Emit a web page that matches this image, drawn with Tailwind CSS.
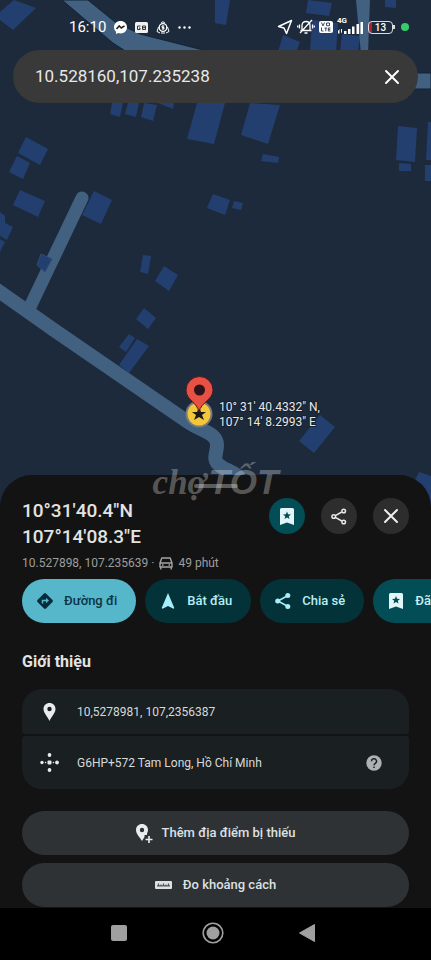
<!DOCTYPE html>
<html lang="vi">
  <head>
    <meta charset="UTF-8" />
    <meta name="viewport" content="width=device-width, initial-scale=1.0" />
    <title>10°31'40.4"N 107°14'08.3"E</title>
    <script src="https://cdn.jsdelivr.net/npm/@tailwindcss/browser@4"></script>
  </head>
  <body class="bg-black font-[Roboto,sans-serif] text-[#e3e3e3]">
    <div class="relative min-h-screen flex flex-col overflow-hidden">
      <div class="relative h-[510px] overflow-hidden bg-[#1c2a3b]">
        <!-- Map -->
        <svg class="absolute inset-0 w-full h-full" viewBox="0 0 431 510" preserveAspectRatio="xMidYMin slice">
          <g fill="#233f70">
            <path d="M14 0L36 8L13 30L0 20V12Z" />
            <path d="M215 0H230L226 25L215 23Z" />
            <path d="M308 0L332 3L329 16L306 13Z" />
            <path d="M385 0H396V8L385 7Z" />
            <path d="M283 35L300 42L296 52H278Z" />
            <path d="M312 20L338 23L336 52H310Z" />
            <path d="M342 34L360 36L358 52H340Z" />
            <path d="M112 103H123L120 117L110 114Z" />
            <path d="M128 103H139L136 117L125 114Z" />
            <path d="M144 103L157 105L153 121L141 117Z" />
            <path d="M158 103H174L173 109Z" />
            <path d="M197 103H225L214 144L187 139Z" />
            <path d="M250 103L280 105L268 144L241 135Z" />
            <path d="M263 154L279 157L278 163L261 161Z" />
            <path d="M398 126L417 128L415 162L396 160Z" />
            <path d="M399 163L411 164V171H399Z" />
            <path d="M428 122H431V160H426Z" />
            <path d="M425 165H431V181H425Z" />
            <path d="M26 137L48 149L40 165L18 153Z" />
            <path d="M17 156L30 163L23 179L9 172Z" />
            <path d="M20 190L45 201L38 217L13 205Z" />
            <path d="M0 212L5 216V223L13 227L7 240L0 236Z" />
            <path d="M0 239L5 242L0 252Z" />
            <path d="M213 194L230 200L225 215L207 208Z" />
            <path d="M234 201L243 203L241 210L232 208Z" />
            <path d="M143 255L151 256L148 274L140 272Z" />
            <path d="M164 266L178 275L169 291L155 281Z" />
            <path d="M144 308L156 318L148 329L136 319Z" />
            <path d="M129 334L135 338L126 352L119 347Z" />
            <path d="M137 339L149 346L129 373L119 365Z" />
            <path d="M320 415L335 427L314 453L299 441Z" />
            <path d="M419 472L431 476V510H400Z" />
          </g>
          <path d="M62 0H88L115 22L140 34L203 50V54H130L113 43L88 22Z" fill="#42607f" stroke="#10243a" />
          <path d="M356 0H370L368 54H361Z" fill="#42607f" />
          <path d="M410 73H431V89H410Z" fill="#42607f" stroke="#10243a" />
          <g fill="none" stroke="#42607f" stroke-linecap="round" stroke-linejoin="round">
            <path d="M82 198L29 309" stroke-width="13" />
            <path d="M-10 285L54 330L188 422C206 433 217 434 217 445C217 453 213 458 217 463C222 469 230 470 238 476" stroke-width="14" />
          </g>
          <path d="M94 191L112 200L101 224L82 215Z" fill="#233f70" />
          <path d="M41 254L52 259L45 272L37 265Z" fill="#233f70" stroke="#2d4d78" />
          <!-- Saved place and pin -->
          <circle cx="199" cy="414" r="12.5" fill="#f2c739" stroke="#78797c" stroke-width="2" />
          <path d="M199 407L201 412H206L202 415L204 420L199 417L194 420L196 415L192 412H197Z" fill="#1c1a18" />
          <path d="M199 412C197 402 186 400 186 390A13.500 13.500 0 0 1 213 390C213 400 201 402 199 412Z" fill="#e95044" stroke="#431b20" />
          <circle cx="199.500" cy="390" r="5.500" fill="#29151b" />
          <g class="text-[12px]" fill="#e6e8eb" stroke="#17202b" stroke-width="2" paint-order="stroke">
            <text x="219" y="411">10° 31' 40.4332" N,</text>
            <text x="219" y="426">107° 14' 8.2993" E</text>
          </g>
        </svg>

        <!-- Status bar -->
        <div class="relative h-[50px] pl-[69px] pr-[22px] pt-1 flex items-center justify-between text-white">
          <div class="flex items-center gap-2">
            <span class="text-[15px]">16:10</span>
            <svg class="w-[13px] h-[13px]" viewBox="0 0 13 13">
              <path d="M6.500 0C2.800 0 0 2.700 0 6.200C0 8 .8 9.600 2 10.700V13L4.300 12C5 12.300 5.700 12.400 6.500 12.400C10.200 12.400 13 9.700 13 6.200S10.200 0 6.500 0Z" fill="#fff" />
              <path d="M2.500 8L5.200 5L7.300 7L10.500 4.800" fill="none" stroke="#222" stroke-width="1.600" />
            </svg>
            <svg class="w-[13px] h-[11px]" viewBox="0 0 13 11">
              <rect width="13" height="11" rx="1.500" fill="#f1f1f1" />
              <path d="M5.500 4H2.500V7.500H5V6H4M7.500 4V7.500H10.500V4ZM7.500 5.700H10.500" fill="none" stroke="#333" />
            </svg>
            <svg class="w-[14px] h-[13px]" viewBox="0 0 14 13" fill="none" stroke="#fff">
              <circle cx="7" cy="6.500" r="3.800" stroke-width="1.300" />
              <path d="M5 2L7 .7L9 2M2.500 6L1 10.500L4 12M11.500 6L13 10.500L10 12M5 12H9M7 4.500V8.500M8.200 5H6V6.500H8V8H5.800" />
            </svg>
            <svg class="w-[13px] h-[3px]" viewBox="0 0 13 3" fill="#fff">
              <circle cx="1.500" cy="1.500" r="1.200" /><circle cx="6.500" cy="1.500" r="1.200" /><circle cx="11.500" cy="1.500" r="1.200" />
            </svg>
          </div>
          <div class="flex items-center gap-1">
            <svg class="w-[16px] h-[16px]" viewBox="0 0 16 16" fill="none" stroke="#fff" stroke-width="1.500" stroke-linejoin="round">
              <path d="M14.500 1.500L1.500 7.500L7 9L9.500 14.500Z" />
            </svg>
            <svg class="w-[18px] h-[16px]" viewBox="0 0 18 16" fill="none" stroke="#fff" stroke-width="1.300">
              <path d="M5 11.500V6.500C5 4 6.500 2.500 9 2.500S13 4 13 6.500V11.500M3.500 11.500H14.500M7.500 14H10.500M15 1L3 14M2.500 5.500V9.500M.7 6.500V8.500M15.500 5.500V9.500M17.300 6.500V8.500" />
            </svg>
            <svg class="w-[14px] h-[12px]" viewBox="0 0 14 12">
              <rect width="14" height="12" rx="2" fill="#fff" />
              <path d="M2.500 1.500L4 5L5.500 1.500M7.500 2H10.500V4.700H7.500ZM2.500 6.500V10H4.500M5.500 7H8M6.800 7V10.300M11.500 7H9.300V10H11.500M9.300 8.500H11.200" fill="none" stroke="#2b3a4d" stroke-width=".9" />
            </svg>
            <div class="relative">
              <span class="absolute left-0 -top-1 text-[8px] leading-2 font-bold">4G</span>
              <svg class="w-[27px] h-[13px]" viewBox="0 0 27 13" fill="#fff">
                <path d="M1 10L2.500 8V12.500H1ZM4 8H5V11L4 12.500ZM7 10H9.500V13H7ZM11 8H13.500V13H11ZM15 5.500H17.500V13H15ZM19.500 3H22V13H19.500ZM23.500 1H26V13H23.500Z" />
              </svg>
            </div>
            <div class="flex items-center">
              <div class="w-[25px] h-[13px] rounded-[4px] border border-[#ddd] text-[10px] leading-[11px] font-medium text-center bg-linear-to-r from-[#b3202c] from-15% to-transparent to-15%">13</div>
              <div class="w-[2px] h-[4px] bg-[#ddd]"></div>
            </div>
            <div class="w-[8px] h-[8px] ml-[2px] rounded-full bg-[#35cb69]"></div>
          </div>
        </div>

        <!-- Search -->
        <form class="relative mx-[13px] h-[53px] pl-[22px] pr-[14px] rounded-full bg-[#393939] flex items-center">
          <input type="text" aria-label="Tìm kiếm" value="10.528160,107.235238" class="flex-1 min-w-0 text-[17px] text-[#e8e8e8] outline-none" />
          <button type="reset" aria-label="Xóa" class="p-1">
            <svg class="w-[16px] h-[16px]" viewBox="0 0 16 16" stroke="#fff" stroke-width="2" stroke-linecap="round">
              <path d="M2 2L14 14M14 2L2 14" />
            </svg>
          </button>
        </form>
      </div>

      <!-- Place sheet -->
      <main class="relative -mt-[35px] rounded-t-[32px] bg-[#131313] flex flex-col">
        <div class="mx-auto mt-[9px] w-[44px] h-[4px] rounded-full bg-[#5c5c5c]"></div>
        <div class="mt-[10px] px-[22px] flex items-start justify-between">
          <h1 class="text-[19px] leading-[26px] font-medium">10°31'40.4"N<br />107°14'08.3"E</h1>
          <div class="flex gap-4">
            <button aria-label="Đã lưu" class="w-[36px] h-[36px] rounded-full bg-[#034d56] flex items-center justify-center">
              <svg class="w-[14px] h-[17px]" viewBox="0 0 14 17">
                <path d="M1.500 0H12.500Q14 0 14 1.500V17L7 14.500L0 17V1.500Q0 0 1.500 0Z" fill="#e2f6fa" />
                <path d="M7 3.500L8.100 6.200L11 6.400L8.800 8.200L9.500 11L7 9.500L4.500 11L5.200 8.200L3 6.400L5.900 6.200Z" fill="#034d56" />
              </svg>
            </button>
            <button aria-label="Chia sẻ" class="w-[36px] h-[36px] rounded-full bg-[#2d2d2d] flex items-center justify-center">
              <svg class="w-[16px] h-[17px]" viewBox="0 0 16 17" fill="none" stroke="#e8e8e8" stroke-width="1.500">
                <path d="M4.300 7.600L10.800 4M4.300 9.400L10.800 13" />
                <circle cx="2.700" cy="8.500" r="1.800" /><circle cx="12.700" cy="3" r="1.800" /><circle cx="12.700" cy="14" r="1.800" />
              </svg>
            </button>
            <button aria-label="Đóng" class="w-[36px] h-[36px] rounded-full bg-[#2d2d2d] flex items-center justify-center">
              <svg class="w-[16px] h-[16px]" viewBox="0 0 16 16" stroke="#eee" stroke-width="2" stroke-linecap="round">
                <path d="M2 2L14 14M14 2L2 14" />
              </svg>
            </button>
          </div>
        </div>

        <p class="mt-[4px] px-[22px] flex items-center gap-[5px] text-[12px] leading-[18px] text-[#9e9e9e]">
          10.527898, 107.235639 ·
          <svg class="w-[14px] h-[13px]" viewBox="0 0 14 13" fill="none" stroke="#a5a5a5" stroke-width="1.400" stroke-linejoin="round">
            <path d="M1 6L2.800 1H11.200L13 6V10H1ZM1 6H13M1.800 10V12.500M12.200 10V12.500" />
            <path d="M3 8H4.500M9.500 8H11" />
          </svg>
          49 phút
        </p>

        <div class="mt-[7px] pl-[22px] flex gap-[9px] overflow-hidden text-[13px] font-medium whitespace-nowrap">
          <button class="shrink-0 h-[44px] pl-[15px] pr-[19px] rounded-full bg-[#55b7c9] text-[#0b3445] flex items-center gap-[11px]">
            <svg class="w-[16px] h-[16px]" viewBox="0 0 16 16">
              <path d="M7 .5Q8 -.4 9 .5L15.500 7Q16.400 8 15.500 9L9 15.500Q8 16.400 7 15.500L.5 9Q-.4 8 .5 7Z" fill="#082b3b" />
              <path d="M5.500 10.500V7.500H9.500" fill="none" stroke="#55b7c9" stroke-width="1.500" />
              <path d="M9 4.800L12 7.500L9 10.200Z" fill="#55b7c9" />
            </svg>
            Đường đi
          </button>
          <button class="shrink-0 h-[44px] pl-[15px] pr-[19px] rounded-full bg-[#033338] text-[#b4edf6] flex items-center gap-[11px]">
            <svg class="w-[16px] h-[16px]" viewBox="0 0 16 16" fill="#a6effa">
              <path d="M8 0L14.300 15L13.500 15.800L8 13L2.500 15.800L1.700 15Z" />
            </svg>
            Bắt đầu
          </button>
          <button class="shrink-0 h-[44px] pl-[15px] pr-[19px] rounded-full bg-[#033338] text-[#b4edf6] flex items-center gap-[11px]">
            <svg class="w-[16px] h-[16px]" viewBox="0 0 16 16" fill="#a6effa">
              <path d="M3 8L13 2.500M3 8L13 13.500" stroke="#a6effa" stroke-width="1.500" />
              <circle cx="2.700" cy="8" r="2.500" /><circle cx="12.800" cy="2.500" r="2.500" /><circle cx="12.800" cy="13.500" r="2.500" />
            </svg>
            Chia sẻ
          </button>
          <button class="shrink-0 h-[44px] pl-[15px] pr-[19px] rounded-full bg-[#034d56] text-[#c9f2f8] flex items-center gap-[11px]">
            <svg class="w-[16px] h-[16px]" viewBox="0 0 16 16">
              <path d="M2.500 0H13.500Q15 0 15 1.500V16L8 13.500L1 16V1.500Q1 0 2.500 0Z" fill="#e2f6fa" />
              <path d="M8 3L9.100 5.700L12 5.900L9.800 7.700L10.500 10.500L8 9L5.500 10.500L6.200 7.700L4 5.900L6.900 5.700Z" fill="#034d56" />
            </svg>
            Đã lưu
          </button>
        </div>

        <section class="mt-[29px] px-[22px]">
          <h2 class="text-[16px] leading-[20px] font-bold">Giới thiệu</h2>
          <div class="mt-[17px] flex flex-col gap-[2px] text-[12px] text-[#d6dadb]">
            <div class="h-[45px] pl-[18px] pr-[27px] rounded-t-[20px] rounded-b-[3px] bg-[#1a1f21] flex items-center gap-[18px]">
              <svg class="w-[19px] h-[18px]" viewBox="0 0 19 18">
                <path d="M9.500 0C6 0 3.500 2.600 3.500 6C3.500 10 7.500 13.500 9.500 18C11.500 13.500 15.500 10 15.500 6C15.500 2.600 13 0 9.500 0ZM9.500 3.800A2.200 2.200 0 1 1 9.500 8.200A2.200 2.200 0 1 1 9.500 3.800Z" fill="#e8eaeb" />
              </svg>
              <span>10,5278981, 107,2356387</span>
            </div>
            <div class="h-[53px] pl-[18px] pr-[27px] rounded-t-[3px] rounded-b-[20px] bg-[#1a1f21] flex items-center gap-[18px]">
              <svg class="w-[19px] h-[19px]" viewBox="0 0 19 19" fill="#e8eaeb">
                <circle cx="9.500" cy="2" r="1.900" /><circle cx="2" cy="9.500" r="1.700" /><circle cx="17" cy="9.500" r="1.900" /><circle cx="9.500" cy="17" r="1.900" />
                <rect x="7.500" y="7.500" width="4" height="4" rx="1" /><circle cx="5.600" cy="9.500" r=".8" /><circle cx="13.400" cy="9.500" r=".8" />
              </svg>
              <span>G6HP+572 Tam Long, Hồ Chí Minh</span>
              <button aria-label="Trợ giúp" class="ml-auto">
                <svg class="w-[16px] h-[16px]" viewBox="0 0 16 16">
                  <circle cx="8" cy="8" r="7.700" fill="#aeb1b2" />
                  <path d="M5.500 6.300A2.500 2.500 0 1 1 9.300 8.300Q8 9.100 8 10.300M8 11.500V13" fill="none" stroke="#1a1f21" stroke-width="1.500" />
                </svg>
              </button>
            </div>
          </div>
        </section>

        <div class="mt-[22px] px-[22px] pb-[1px] flex flex-col gap-2 text-[13px] font-medium text-[#dce1e3]">
          <button class="h-[44px] rounded-full bg-[#2e3235] flex items-center justify-center gap-[9px]">
            <svg class="w-[17px] h-[19px]" viewBox="0 0 17 19">
              <path d="M6 0C2.600 0 0 2.500 0 6C0 10 4 13.500 6 17L8.500 13V11H11V9.500C11.600 8.500 12 7.200 12 6C12 2.500 9.400 0 6 0ZM6 3.800A2.200 2.200 0 1 1 6 8.200A2.200 2.200 0 1 1 6 3.800Z" fill="#e8eef0" />
              <path d="M13 12V19M9.500 15.500H16.500" stroke="#e8eef0" stroke-width="1.600" />
            </svg>
            Thêm địa điểm bị thiếu
          </button>
          <button class="h-[44px] rounded-full bg-[#2e3235] flex items-center justify-center gap-[11px]">
            <svg class="w-[17px] h-[8px]" viewBox="0 0 17 8">
              <rect width="17" height="8" rx="1" fill="#dce1e3" />
              <path d="M2 4.800H15M3.500 2.500V5M6 3.500V5M8.500 2.500V5M11 3.500V5M13.500 2.500V5" stroke="#4d5558" stroke-width="1.200" />
            </svg>
            Đo khoảng cách
          </button>
        </div>
      </main>

      <!-- System navigation -->
      <nav class="flex-1 min-h-[52px] pb-[3px] pr-[5px] flex items-center justify-center gap-[74px]">
        <button aria-label="Gần đây" class="w-[20px] flex justify-center">
          <svg class="w-[16px] h-[16px]" viewBox="0 0 16 16"><rect width="16" height="16" rx="2" fill="#a0a0a0" /></svg>
        </button>
        <button aria-label="Trang chủ" class="w-[20px] flex justify-center">
          <svg class="w-[22px] h-[22px] shrink-0" viewBox="0 0 22 22">
            <circle cx="11" cy="11" r="9.800" fill="none" stroke="#a0a0a0" stroke-width="1.600" /><circle cx="11" cy="11" r="6.500" fill="#a0a0a0" />
          </svg>
        </button>
        <button aria-label="Quay lại" class="w-[20px] flex justify-center">
          <svg class="w-[16px] h-[18px]" viewBox="0 0 16 18"><path d="M15.500 .5V17.500L.5 9Z" fill="#a0a0a0" stroke="#a0a0a0" stroke-linejoin="round" /></svg>
        </button>
      </nav>

      <!-- Watermark -->
      <div class="absolute top-[460px] inset-x-0 flex items-baseline justify-center gap-[2px] leading-[44px] font-bold italic text-white/30 pointer-events-none">
        <span class="font-[Liberation_Serif,serif] text-[35px]">chợ</span>
        <span class="font-[Liberation_Sans,sans-serif] text-[35px]">TỐT</span>
      </div>
    </div>
  </body>
</html>
